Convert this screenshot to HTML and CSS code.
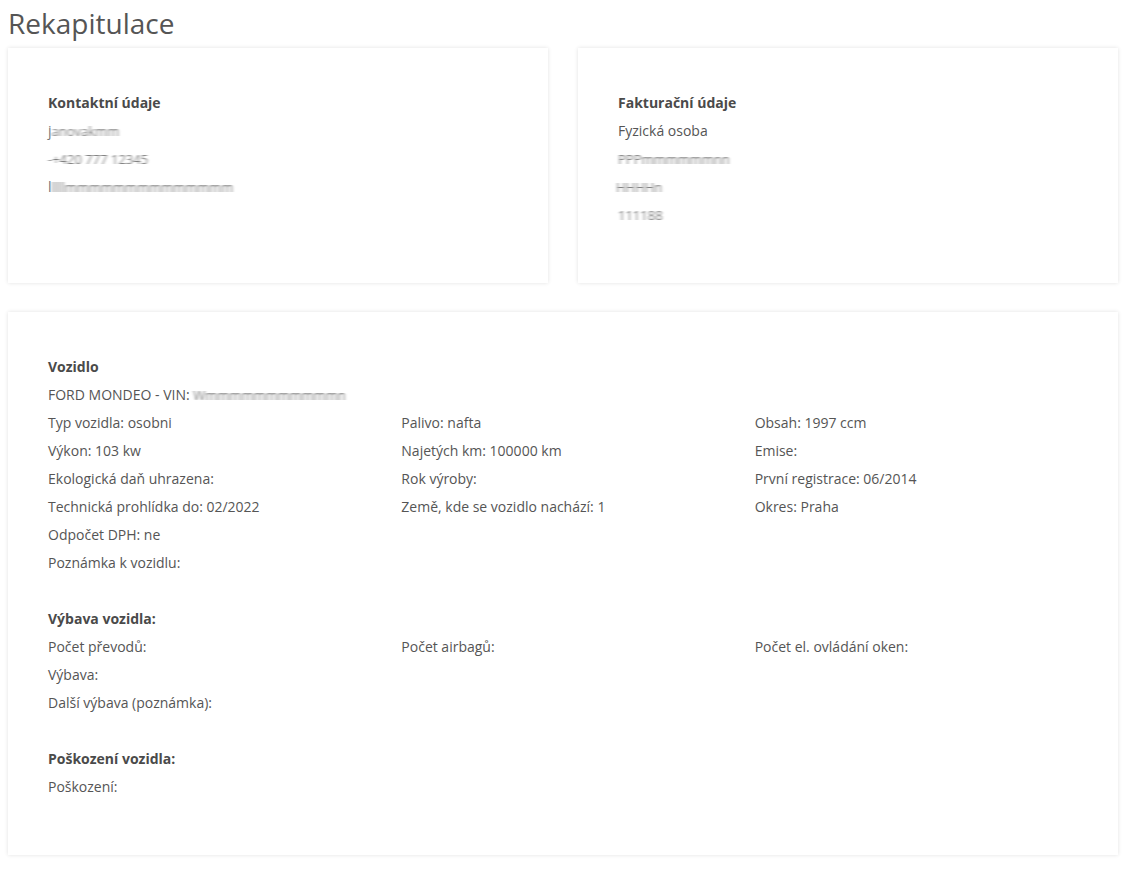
FILE: index.html
```html
<!DOCTYPE html>
<html lang="cs">
<head>
<meta charset="utf-8">
<title>Rekapitulace</title>
<link rel="stylesheet" href="styles.css">
</head>
<body>
<svg class="defs" width="0" height="0" aria-hidden="true">
  <filter id="hblur" x="-10%" y="-30%" width="120%" height="160%">
    <feGaussianBlur stdDeviation="1.8 0.4"/>
  </filter>
</svg>
<div class="page">
  <h1 class="title">Rekapitulace</h1>
  <div class="top-row">
    <section class="card">
      <div class="line heading">Kontaktní údaje</div>
      <div class="line"><span class="clear">j</span><span class="blur">anovakmm</span></div>
      <div class="line"><span class="blur">-+420 777 12345</span></div>
      <div class="line"><span class="clear">l</span><span class="blur">llllmmmmmmmmmmmmmm</span></div>
    </section>
    <section class="card">
      <div class="line heading">Fakturační údaje</div>
      <div class="line">Fyzická osoba</div>
      <div class="line"><span class="blur">PPPmmmmmmnn</span></div>
      <div class="line"><span class="blur shift">HHHHn</span></div>
      <div class="line"><span class="blur">111188</span></div>
    </section>
  </div>
  <section class="card wide">
    <div class="line heading">Vozidlo</div>
    <div class="line">FORD MONDEO - VIN: <span class="blur">Wmmmmmmmmmmmn</span></div>
    <div class="grid">
      <div class="line">Typ vozidla: osobni</div>
      <div class="line">Palivo: nafta</div>
      <div class="line">Obsah: 1997 ccm</div>
      <div class="line">Výkon: 103 kw</div>
      <div class="line">Najetých km: 100000 km</div>
      <div class="line">Emise:</div>
      <div class="line">Ekologická daň uhrazena:</div>
      <div class="line">Rok výroby:</div>
      <div class="line">První registrace: 06/2014</div>
      <div class="line">Technická prohlídka do: 02/2022</div>
      <div class="line">Země, kde se vozidlo nachází: 1</div>
      <div class="line">Okres: Praha</div>
    </div>
    <div class="line">Odpočet DPH: ne</div>
    <div class="line">Poznámka k vozidlu:</div>
    <div class="line spacer"></div>
    <div class="line heading">Výbava vozidla:</div>
    <div class="grid">
      <div class="line">Počet převodů:</div>
      <div class="line">Počet airbagů:</div>
      <div class="line">Počet el. ovládání oken:</div>
    </div>
    <div class="line">Výbava:</div>
    <div class="line">Další výbava (poznámka):</div>
    <div class="line spacer"></div>
    <div class="line heading">Poškození vozidla:</div>
    <div class="line">Poškození:</div>
  </section>
</div>
</body>
</html>
```
FILE: styles.css
```css
html, body {
  margin: 0;
  padding: 0;
  background: #ffffff;
}
body {
  font-family: "Open Sans", "Liberation Sans", sans-serif;
  font-size: 14px;
  color: #555555;
}
.defs {
  position: absolute;
  width: 0;
  height: 0;
}
.page {
  width: 1110px;
  padding: 0 8px 20px;
}
.title {
  margin: 4px 0 6px;
  font-size: 28px;
  line-height: 38px;
  font-weight: 400;
  color: #555555;
}
.top-row {
  display: flex;
  gap: 30px;
  align-items: stretch;
  margin-bottom: 29px;
}
.top-row .card {
  flex: 1 1 0;
}
.card {
  background: #ffffff;
  box-shadow: 0 0 4px rgba(0, 0, 0, 0.12);
  padding: 41px 40px 54px;
}
.line {
  line-height: 28px;
  height: 28px;
  white-space: nowrap;
}
.heading {
  font-weight: 700;
  color: #4a4a4a;
}
.grid {
  display: grid;
  grid-template-columns: repeat(3, 1fr);
  column-gap: 30px;
}
.blur {
  display: inline-block;
  color: #808080;
  filter: url(#hblur);
  font-size: 13px;
  vertical-align: top;
}
.clear {
  color: #777777;
}
.shift { margin-left: -2px; }
.spacer { height: 28px; }
```
